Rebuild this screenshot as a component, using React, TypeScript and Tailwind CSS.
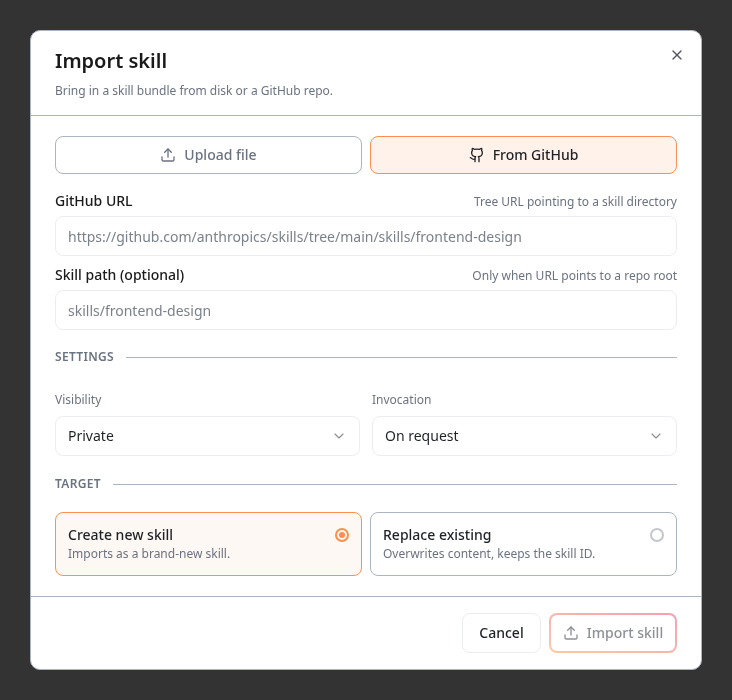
import { ChevronDown, Upload, X } from "lucide-react";

const GithubIcon = () => (
  <svg width="16" height="16" viewBox="0 0 24 24" fill="none" stroke="currentColor" strokeWidth="2" strokeLinecap="round" strokeLinejoin="round">
    <path d="M15 22v-4a4.8 4.8 0 0 0-1-3.5c3 0 6-2 6-5.5.08-1.25-.27-2.48-1-3.5.28-1.15.28-2.35 0-3.5 0 0-1 0-3 1.5-2.64-.5-5.36-.5-8 0C6 2 5 2 5 2c-.3 1.15-.3 2.35 0 3.5A5.403 5.403 0 0 0 4 9c0 3.5 3 5.5 6 5.5-.39.49-.68 1.05-.85 1.65-.17.6-.22 1.23-.15 1.85v4" />
    <path d="M9 18c-4.51 2-5-2-7-2" />
  </svg>
);

const Field = ({ label, hint, value }: { label: string; hint: string; value: string }) => (
  <div>
    <div className="flex items-baseline justify-between h-[20px] mb-[5px]">
      <span className="text-[14px] leading-[20px] font-medium text-[#1a1a1a]">{label}</span>
      <span className="text-[12px] leading-[16px] text-[#6b7280]">{hint}</span>
    </div>
    <div className="h-[40px] rounded-[8px] border border-[#ebedf0] px-[12px] flex items-center text-[14px] text-[#7b818a] truncate">
      {value}
    </div>
  </div>
);

const Section = ({ title }: { title: string }) => (
  <div className="flex items-center gap-[12px] h-[16px]">
    <span className="text-[12px] leading-[16px] font-semibold tracking-[0.3px] text-[#6b7280]">{title}</span>
    <div className="flex-1 h-px bg-[#abb5c0]" />
  </div>
);

const SelectBox = ({ label, value }: { label: string; value: string }) => (
  <div className="flex-1">
    <div className="text-[12px] leading-[16px] text-[#6b7280] mb-[8px]">{label}</div>
    <div className="h-[40px] rounded-[8px] border border-[#ebedf0] pl-[12px] pr-[12px] flex items-center justify-between text-[14px] leading-[20px] text-[#1f2328]">
      {value}
      <ChevronDown size={16} strokeWidth={1.75} className="text-[#8a8f96]" />
    </div>
  </div>
);

const TargetCard = ({ title, desc, active }: { title: string; desc: string; active?: boolean }) => (
  <div
    className={
      active
        ? "flex-1 h-[64px] rounded-[8px] border border-[#fb9150] bg-[#fef8f4] px-[12px] flex items-start justify-between pt-[12px]"
        : "flex-1 h-[64px] rounded-[8px] border border-[#abb5c0] bg-white px-[12px] flex items-start justify-between pt-[12px]"
    }
  >
    <div>
      <div className="text-[14px] leading-[20px] font-medium text-[#1f2328]">{title}</div>
      <div className="text-[12px] leading-[16px] mt-[1px] text-[#6b7280]">{desc}</div>
    </div>
    {active ? (
      <div className="w-[14px] h-[14px] mt-[3px] rounded-full border-2 border-[#fb8f4e] flex items-center justify-center">
        <div className="w-[6px] h-[6px] rounded-full bg-[#fb8f4e]" />
      </div>
    ) : (
      <div className="w-[14px] h-[14px] mt-[3px] rounded-full border-2 border-[#c4c7cb]" />
    )}
  </div>
);

export default function App() {
  return (
    <div className="w-full h-[700px] bg-[#333333] flex items-center justify-center font-['Noto_Sans',sans-serif]">
      <div className="relative w-[672px] h-[640px] bg-white rounded-[10px] border border-[#abb5c0] flex flex-col overflow-hidden transform-gpu">
        <div className="h-[85px] border-b border-[#abb5c0] pl-[24px] pt-[16px] shrink-0">
          <h1 className="text-[20px] leading-[28px] font-semibold text-[#1a1a1a]">Import skill</h1>
          <p className="text-[12px] leading-[16px] mt-[8px] text-[#6b7280]">Bring in a skill bundle from disk or a GitHub repo.</p>
        </div>
        <button className="absolute top-[16px] right-[16px] text-[#55595f]">
          <X size={16} />
        </button>

        <div className="flex-1 px-[24px] pt-[20px]">
          <div className="flex gap-[8px]">
            <button className="flex-1 h-[38px] rounded-[8px] border border-[#abb5c0] flex items-center justify-center gap-[8px] text-[14px] leading-[20px] font-medium text-[#6b7280]">
              <Upload size={16} /> Upload file
            </button>
            <button className="flex-1 h-[38px] rounded-[8px] border border-[#fb9150] bg-[#fff2ea] flex items-center justify-center gap-[8px] text-[14px] leading-[20px] font-medium text-[#1f2328]">
              <GithubIcon /> From GitHub
            </button>
          </div>
          <div className="mt-[17px]">
            <Field label="GitHub URL" hint="Tree URL pointing to a skill directory" value="https://github.com/anthropics/skills/tree/main/skills/frontend-design" />
          </div>
          <div className="mt-[9px]">
            <Field label="Skill path (optional)" hint="Only when URL points to a repo root" value="skills/frontend-design" />
          </div>
          <div className="mt-[19px]">
            <Section title="SETTINGS" />
          </div>
          <div className="flex gap-[12px] mt-[27px]">
            <SelectBox label="Visibility" value="Private" />
            <SelectBox label="Invocation" value="On request" />
          </div>
          <div className="mt-[20px]">
            <Section title="TARGET" />
          </div>
          <div className="flex gap-[8px] mt-[20px]">
            <TargetCard title="Create new skill" desc="Imports as a brand-new skill." active />
            <TargetCard title="Replace existing" desc="Overwrites content, keeps the skill ID." />
          </div>
        </div>

        <div className="h-[73px] border-t border-[#abb5c0] px-[24px] flex items-center justify-end gap-[8px] shrink-0">
          <button className="h-[40px] w-[79px] rounded-[8px] border border-[#ebedf0] text-[14px] leading-[20px] font-medium text-[#1f2328]">Cancel</button>
          <div className="h-[40px] w-[128px] rounded-[8px] p-[2px] bg-gradient-to-tr from-[#fdc9a0] to-[#f4a0b4]">
            <div className="h-full w-full rounded-[6px] bg-white flex items-center justify-center gap-[8px] text-[14px] leading-[20px] font-medium text-[#8c9097]">
              <Upload size={16} /> Import skill
            </div>
          </div>
        </div>
      </div>
    </div>
  );
}
